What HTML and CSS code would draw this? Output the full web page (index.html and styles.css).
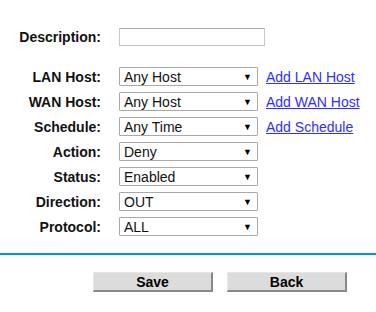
FILE: index.html
```html
<!DOCTYPE html>
<html>
<head>
    <title>Access Control Rule</title>
    <meta name="viewport" content="width=device-width, initial-scale=1.0">
    <link rel="stylesheet" href="styles.css">
</head>
<body>
    <form class="rule-form" onsubmit="return false;">
        <div class="row row-desc">
            <label class="label" for="desc">Description:</label>
            <input id="desc" class="text-input" type="text">
        </div>

        <div class="rows">
            <div class="row">
                <span class="label">LAN Host:</span>
                <div class="select"><span>Any Host</span><span class="arrow">&#9660;</span></div>
                <a class="link" href="#">Add LAN Host</a>
            </div>
            <div class="row">
                <span class="label">WAN Host:</span>
                <div class="select"><span>Any Host</span><span class="arrow">&#9660;</span></div>
                <a class="link" href="#">Add WAN Host</a>
            </div>
            <div class="row">
                <span class="label">Schedule:</span>
                <div class="select"><span>Any Time</span><span class="arrow">&#9660;</span></div>
                <a class="link" href="#">Add Schedule</a>
            </div>
            <div class="row">
                <span class="label">Action:</span>
                <div class="select"><span>Deny</span><span class="arrow">&#9660;</span></div>
            </div>
            <div class="row">
                <span class="label">Status:</span>
                <div class="select"><span>Enabled</span><span class="arrow">&#9660;</span></div>
            </div>
            <div class="row">
                <span class="label">Direction:</span>
                <div class="select"><span>OUT</span><span class="arrow">&#9660;</span></div>
            </div>
            <div class="row">
                <span class="label">Protocol:</span>
                <div class="select"><span>ALL</span><span class="arrow">&#9660;</span></div>
            </div>
        </div>

        <div class="divider"></div>

        <div class="buttons">
            <button class="button" type="button">Save</button>
            <button class="button" type="button">Back</button>
        </div>
    </form>
</body>
</html>
```

FILE: styles.css
```css
body {
    font-family: "Liberation Sans", Arial, sans-serif;
    font-size: 14px;
    background-color: #fff;
    color: #000;
    margin: 0;
    padding: 0;
}
.rule-form {
    padding-top: 28px;
}
.row {
    display: flex;
    align-items: center;
    height: 19px;
}
.row-desc {
    height: 18px;
}
.rows {
    display: flex;
    flex-direction: column;
    gap: 6px;
    margin-top: 21px;
}
.label {
    width: 101px;
    margin-right: 18px;
    text-align: right;
    font-weight: bold;
    color: #111;
}
.text-input {
    box-sizing: border-box;
    width: 146px;
    height: 18px;
    margin: 0;
    padding: 0 3px;
    border: 1px solid #c8c8c8;
    border-top-color: #a8a8a8;
    font-family: inherit;
    font-size: 14px;
}
.select {
    box-sizing: border-box;
    display: flex;
    align-items: center;
    justify-content: space-between;
    width: 139px;
    height: 19px;
    padding: 0 5px 0 4px;
    border: 1px solid #a9a9a9;
    border-radius: 1px;
    color: #111;
}
.arrow {
    font-size: 9px;
    color: #000;
}
.link {
    margin-left: 8px;
    color: #2e2eff;
    text-decoration: underline;
}
.divider {
    height: 2px;
    margin-top: 17px;
    background-color: #0099cc;
}
.buttons {
    display: flex;
    gap: 14px;
    padding-left: 93px;
    margin-top: 17px;
}
.button {
    box-sizing: border-box;
    width: 120px;
    height: 20px;
    margin: 0;
    padding: 0;
    background-color: #dcdcdc;
    border: 1px solid;
    border-color: #e6e6e6 #888 #888 #e6e6e6;
    border-width: 1px 2px 2px 1px;
    font-family: inherit;
    font-size: 14px;
    font-weight: bold;
    color: #000;
}
```
